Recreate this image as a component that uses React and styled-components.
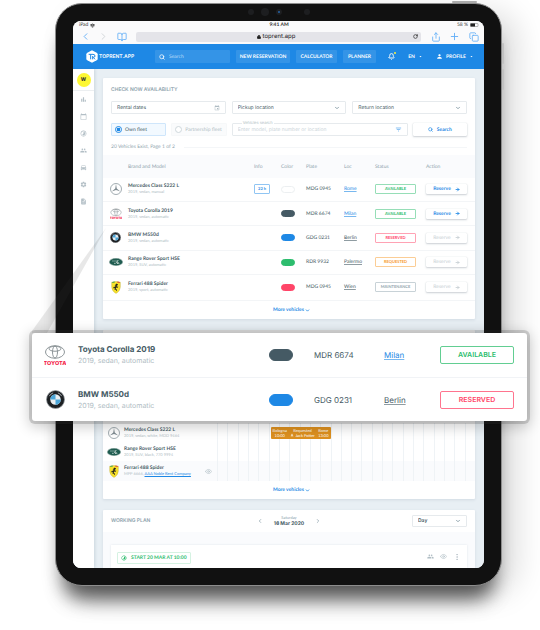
import React from "react";
import styled, { createGlobalStyle, css } from "styled-components";
import {
  BookOpen, ChevronDown, ChevronLeft, ChevronRight, Copy, Plus, RotateCw, Share,
  Search, Bell, Eye, MoreVertical, Wifi, ArrowRight, Lock,
} from "lucide-react";
import {
  MdBarChart, MdCalendarToday, MdTimelapse, MdPeople, MdDirectionsCar, MdSettings,
  MdDescription, MdPerson, MdFilterList, MdArrowDropDown, MdEvent, MdGroup,
} from "react-icons/md";

const c = {
  ink: "#455a64",
  mute: "#90a4ae",
  soft: "#b0bdc4",
  line: "#eceff1",
  blue: "#1e88e5",
  green: "#2dbd6e",
  red: "#ff4568",
  orange: "#f79a2b",
};

const wide = `Inter, "Liberation Sans", sans-serif`;

const GlobalStyle = createGlobalStyle`
  *, *::before, *::after { box-sizing: border-box; }
  body {
    margin: 0;
    overflow-x: hidden;
    background: #fff;
    color: ${c.ink};
    font-family: Lato, "Liberation Sans", sans-serif;
    font-size: 5px;
    line-height: 6px;
    text-rendering: geometricPrecision;
  }
  button, input, select { font: inherit; color: inherit; margin: 0; padding: 0; border: 0; background: none; border-radius: 0; outline: 0; text-rendering: inherit; }
  button { cursor: pointer; white-space: nowrap; }
  svg { display: block; flex: none; }
  h2 { margin: 0; }
`;

const Page = styled.div`
  position: relative;
  padding: 3px 38px 43px 55px;
  overflow: hidden;
`;

const Tablet = styled.div`
  position: relative;
  border: 1px solid #8d8d8d;
  border-radius: 27px;
  background: #111;
  padding: 17px;
  box-shadow: 0 20px 18px -8px rgba(0, 0, 0, 0.5), 0 26px 24px -14px rgba(0, 0, 0, 0.3), 16px 8px 30px rgba(0, 0, 0, 0.13);
`;

const SideKey = styled.span`
  position: absolute;
  right: -3px;
  top: ${(p) => p.$top}px;
  width: 2px;
  height: 21px;
  border-radius: 1px;
  background: #c2c2c2;
`;

const PowerKey = styled.span`
  position: absolute;
  right: 24px;
  top: -3px;
  width: 25px;
  height: 2px;
  border-radius: 1px;
  background: #aaa;
`;

const Camera = styled.svg`
  position: absolute;
  left: 50%;
  top: 3px;
  transform: translateX(-50%);
`;

const Screen = styled.div`
  overflow: hidden;
  border-radius: 8px;
  background: #fff;
`;

const BrowserChrome = styled.div`
  height: 23px;
  background: #fafafb;
`;

const StatusBar = styled.div`
  display: grid;
  grid-template-columns: 1fr auto 1fr;
  align-items: center;
  height: 8px;
  padding: 0 5px 0 6px;
  color: #333;
  font-weight: 700;
`;

const StatusGroup = styled.span`
  display: flex;
  align-items: center;
  gap: 2px;
  font-weight: 400;
  justify-content: ${(p) => (p.$end ? "flex-end" : "flex-start")};
`;

const Toolbar = styled.div`
  display: flex;
  align-items: center;
  height: 15px;
  padding: 0 1px 0 7px;
  color: #62aef7;
`;

const ToolButton = styled.button`
  display: grid;
  place-items: center;
  width: ${(p) => p.$w || 19}px;
  color: ${(p) => (p.$off ? "#cfd3d8" : "inherit")};
`;

const Address = styled.div`
  flex: 1;
  display: flex;
  align-items: center;
  height: 10px;
  margin: 0 5px 0 8px;
  padding: 0 3px;
  border-radius: 2px;
  background: #e4e4e9;
  color: #222;
  font-family: ${wide};
  font-size: 6px;
`;

const AddressText = styled.span`
  flex: 1;
  display: flex;
  justify-content: center;
  align-items: center;
  gap: 2px;
`;

const AppBar = styled.header`
  display: flex;
  align-items: center;
  height: 25px;
  padding: 0 10px 0 13px;
  background: ${c.blue};
  color: #fff;
  font-weight: 700;
`;

const Brand = styled.a`
  display: flex;
  align-items: center;
  gap: 1px;
  width: 69px;
  color: inherit;
  text-decoration: none;
  font-family: ${wide};
  font-size: 5px;
  font-weight: 600;
`;

const HeaderSearch = styled.label`
  display: flex;
  align-items: center;
  gap: 4px;
  width: 75px;
  height: 13px;
  padding: 0 4px;
  border-radius: 1px;
  background: rgba(255, 255, 255, 0.1);
  font-weight: 400;
  input { flex: 1; min-width: 0; }
  input::placeholder { color: #b8dbf8; opacity: 1; }
`;

const NavButton = styled.button`
  width: ${(p) => p.$w}px;
  height: 13px;
  margin-left: 6px;
  border-radius: 1px;
  background: rgba(255, 255, 255, 0.1);
  font-weight: 700;
`;

const HeaderTools = styled.div`
  display: flex;
  align-items: center;
  margin-left: auto;
  gap: 13px;
`;

const HeaderTool = styled.button`
  position: relative;
  display: flex;
  align-items: center;
  gap: 3px;
  font-weight: 700;
`;

const Dot = styled.span`
  position: absolute;
  top: -1px;
  right: -1px;
  width: 2px;
  height: 2px;
  border-radius: 50%;
  background: #fff23a;
`;

const Body = styled.div`
  display: grid;
  grid-template-columns: 21px 1fr;
  background: #e8eff4;
`;

const Sidebar = styled.nav`
  display: flex;
  flex-direction: column;
  align-items: center;
  background: #fff;
  box-shadow: 1px 0 3px rgba(80, 110, 130, 0.2);
  color: #b3bfc6;
`;

const AvatarCell = styled.div`
  display: grid;
  place-items: center;
  width: 100%;
  height: 22px;
  border-bottom: 1px solid ${c.line};
`;

const Avatar = styled.button`
  width: 14px;
  height: 14px;
  border-radius: 50%;
  background: #fdf733;
  color: #333;
  font-family: ${wide};
  font-weight: 800;
`;

const SideLink = styled.a`
  display: grid;
  place-items: center;
  height: 17px;
  color: inherit;
`;

const Main = styled.main`
  display: flex;
  flex-direction: column;
  gap: 11px;
  min-width: 0;
  padding: 9px 9px 0;
`;

const Card = styled.section`
  background: #fff;
  border-radius: 1px;
  box-shadow: 0 1px 3px rgba(80, 110, 130, 0.15);
`;

const Title = styled.h2`
  color: ${c.mute};
  font-family: ${wide};
  font-size: 5px;
  line-height: 8px;
  font-weight: 600;
`;

const SearchForm = styled.form`
  display: flex;
  flex-direction: column;
  gap: 9px;
  padding: 8px 8px 0;
`;

const FieldRow = styled.div`
  display: grid;
  grid-template-columns: 1fr 1fr 1fr;
  gap: 6px;
  margin-top: ${(p) => (p.$first ? -2 : 0)}px;
`;

const FieldRowSearch = styled(FieldRow)`
  grid-template-columns: 55fr 55fr 175fr 54fr;
  gap: 5px;
`;

const box = css`
  height: 13px;
  border: 1px solid #e6eaed;
  border-radius: 1px;
`;

const Field = styled.label`
  ${box}
  position: relative;
  display: grid;
  align-items: center;
  min-width: 0;
  padding: 0 5px;
  font-family: ${wide};
  font-size: 5px;
  color: ${c.mute};
  > * { grid-area: 1 / 1; }
  > svg { justify-self: end; pointer-events: none; }
  > input, > select { width: 100%; appearance: none; color: ${c.ink}; }
  > input::placeholder { color: ${(p) => (p.$faint ? "#ccd5da" : c.ink)}; opacity: 1; }
`;

const FloatLabel = styled.span`
  position: absolute;
  top: -4px;
  left: 4px;
  padding: 0 1px;
  background: #fff;
  color: ${c.soft};
  font-size: 4px;
`;

const FleetOption = styled.label`
  ${box}
  display: flex;
  align-items: center;
  gap: 3px;
  min-width: 0;
  padding: 0 3px;
  white-space: nowrap;
  border-color: ${(p) => (p.$on ? "#cfe6fb" : "#f6f8f9")};
  background: ${(p) => (p.$on ? "#f2f9ff" : "#fafbfc")};
  color: ${(p) => (p.$on ? c.ink : c.soft)};
  input {
    appearance: none;
    flex: none;
    width: 7px;
    height: 7px;
    border: 1px solid #cfd8dc;
    border-radius: 50%;
    background: #fff;
  }
  input:checked {
    border-color: ${c.blue};
    background: radial-gradient(circle, ${c.blue} 45%, #fff 60%);
  }
`;

const RaisedButton = styled.button`
  display: flex;
  align-items: center;
  justify-content: center;
  gap: 4px;
  width: 100%;
  height: ${(p) => p.$h || 10}px;
  border-radius: 1px;
  background: #fff;
  box-shadow: 0 1px 2px rgba(60, 80, 100, 0.25), 0 0 1px rgba(60, 80, 100, 0.25);
  color: ${c.blue};
  font-weight: 700;
  &:disabled { color: #c5ced3; font-weight: 400; cursor: default; }
`;

const Summary = styled.div`
  display: flex;
  align-items: center;
  gap: 9px;
  height: 6px;
  margin-top: -1px;
  color: ${c.mute};
  &::after { content: ""; flex: 1; border-top: 1px solid #f4f6f8; }
`;

const FleetTable = styled.table`
  width: 100%;
  height: 146px;
  margin-top: 5px;
  table-layout: fixed;
  border-collapse: collapse;
  th { height: 23px; padding: 0; background: #fafbfd; color: ${c.mute}; text-align: left; font-weight: 400; }
  td { padding: 0; border-bottom: 1px solid #f3f5f7; }
  td:last-child { padding-right: 8px; }
`;

const Col = styled.col`
  width: ${(p) => (p.$w ? `${p.$w}px` : "auto")};
`;

const LogoBox = styled.div`
  display: grid;
  place-items: center;
  width: ${(p) => p.$w || 25}px;
`;

const CarName = styled.div`
  font-weight: 700;
  font-family: ${(p) => (p.$big ? wide : "inherit")};
  font-size: ${(p) => (p.$big ? 8 : 5)}px;
  line-height: ${(p) => (p.$big ? 11 : 6)}px;
`;

const CarMeta = styled.div`
  color: ${c.soft};
  font-family: ${(p) => (p.$big ? wide : "inherit")};
  font-size: ${(p) => (p.$big ? 7 : 4)}px;
  line-height: ${(p) => (p.$big ? 11 : 6)}px;
  a { color: ${c.blue}; }
`;

const InfoTag = styled.button`
  width: 16px;
  height: 10px;
  border: 1px solid #90c5f3;
  border-radius: 1px;
  color: ${c.blue};
  font-size: 4px;
  line-height: 6px;
  font-weight: 700;
`;

const Swatch = styled.div`
  width: ${(p) => (p.$big ? 24 : 14)}px;
  height: ${(p) => (p.$big ? 12 : 7)}px;
  border-radius: 6px;
  background: ${(p) => p.$color};
  border: 1px solid ${(p) => (p.$color === "#fff" ? c.line : p.$color)};
`;

const Place = styled.a`
  color: ${(p) => (p.$active ? c.blue : c.ink)};
  text-underline-offset: 1px;
  text-decoration-thickness: 1px;
  text-decoration-color: color-mix(in srgb, currentColor 60%, #fff);
`;

const tone = { AVAILABLE: c.green, RESERVED: c.red, REQUESTED: c.orange, MAINTENANCE: c.mute };

const Status = styled.span`
  display: flex;
  align-items: center;
  justify-content: center;
  width: ${(p) => (p.$big ? 74 : 41)}px;
  height: ${(p) => (p.$big ? 18 : 10)}px;
  border: 1px solid color-mix(in srgb, ${(p) => tone[p.$kind]} ${(p) => (p.$big ? 75 : 50)}%, #fff);
  border-radius: ${(p) => (p.$big ? 2 : 1)}px;
  color: ${(p) => tone[p.$kind]};
  font-family: ${(p) => (p.$big ? wide : "inherit")};
  font-size: ${(p) => (p.$big ? 7 : 4)}px;
  font-weight: ${(p) => (p.$big ? 600 : 700)};
`;

const MoreButton = styled.button`
  display: flex;
  align-items: center;
  justify-content: center;
  gap: 1px;
  width: 100%;
  height: 18px;
  padding-left: 5px;
  color: ${c.blue};
  font-weight: 700;
`;

const PlannerHead = styled.div`
  height: 93px;
`;

const Lane = styled.div`
  display: grid;
  grid-template-columns: 114px 1fr;
  height: ${(p) => (p.$shade ? 20 : 19)}px;
  background: ${(p) => (p.$shade ? "#fafbfd" : "#fff")};
`;

const LaneCar = styled.div`
  display: flex;
  align-items: center;
  padding-right: 5px;
  > div + div { flex: 1; white-space: nowrap; }
`;

const Hours = styled.div`
  display: grid;
  grid-template-columns: repeat(25, 1fr);
  grid-template-rows: 100%;
  align-items: center;
`;

const Hour = styled.span`
  grid-row: 1;
  grid-column: ${(p) => p.$n};
  height: 100%;
  border-left: 1px solid #eff3f6;
`;

const Booking = styled.div`
  grid-row: 1;
  grid-column: 6 / span 6;
  display: flex;
  justify-content: space-between;
  height: 12px;
  margin-left: 2px;
  padding: 1px 2px;
  border-radius: 1px;
  background: #dd901f;
  color: #fff;
  font-size: 4px;
  line-height: 5px;
  font-weight: 400;
  white-space: nowrap;
`;

const BookingPart = styled.span`
  display: grid;
  justify-items: center;
`;

const WithIcon = styled.span`
  display: flex;
  align-items: center;
  gap: 1px;
`;

const PlanHead = styled.div`
  display: grid;
  grid-template-columns: 1fr auto 1fr;
  align-items: center;
  height: 22px;
  padding: 0 8px;
`;

const DateNav = styled.div`
  display: flex;
  align-items: center;
  gap: 11px;
  color: ${c.mute};
`;

const DateText = styled.div`
  text-align: center;
  font-size: 4px;
  strong { display: block; color: ${c.ink}; font-family: ${wide}; font-size: 5px; font-weight: 700; }
`;

const PeriodField = styled(Field)`
  justify-self: end;
  width: 55px;
  height: 12px;
  font-weight: 600;
`;

const PlanBody = styled.div`
  padding: 13px 8px 0;
  background: #fafbfd;
`;

const PlanItem = styled.div`
  display: flex;
  align-items: center;
  justify-content: space-between;
  height: 23px;
  padding: 0 6px;
  background: #fff;
  box-shadow: 0 0 2px rgba(80, 110, 130, 0.15);
`;

const StartButton = styled.button`
  display: flex;
  align-items: center;
  gap: 4px;
  height: 12px;
  min-width: 70px;
  padding: 0 3px;
  margin-top: 2px;
  border: 1px solid #d5f2e2;
  border-radius: 1px;
  color: ${c.green};
  font-weight: 700;
`;

const ItemTools = styled.div`
  display: flex;
  align-items: center;
  gap: 6px;
  color: ${c.soft};
`;

const Beam = styled.svg`
  position: absolute;
  left: 32px;
  top: 228px;
`;

const Magnifier = styled.div`
  position: absolute;
  top: 333px;
  left: 32px;
  right: 13px;
  border-radius: 3px;
  background: #fff;
  box-shadow: 0 0 0 3px rgba(60, 60, 60, 0.2), 0 3px 14px 3px rgba(0, 0, 0, 0.2);
`;

const BigRow = styled.div`
  display: grid;
  grid-template-columns: 46px 1fr 45px 70px 56px 87px;
  align-items: center;
  height: 44px;
  font-family: ${wide};
  font-size: 8px;
  line-height: 10px;
  & + & { border-top: 1px solid #f1f3f6; }
`;

function Mercedes() {
  return (
    <svg width="12" height="12" viewBox="0 0 24 24" fill="none" stroke="#8c989e" strokeWidth="1.6">
      <circle cx="12" cy="12" r="11" />
      <path d="M12 2l1.5 9 7 6-8.500-3-8.500 3 7-6z" fill="#7f8b91" stroke="none" />
    </svg>
  );
}

function Toyota({ size = 12 }) {
  return (
    <svg width={size} height={size} viewBox="0 0 44 44">
      <g fill="none" stroke="#8e9699" strokeWidth="2">
        <ellipse cx="22" cy="16" rx="19" ry="12.500" />
        <ellipse cx="22" cy="9.500" rx="12" ry="5" />
        <ellipse cx="22" cy="16" rx="5" ry="12" />
      </g>
      <text x="22" y="42" textAnchor="middle" fontFamily="Inter, sans-serif" fontSize="11" fontWeight="800" fill="#f4264b">TOYOTA</text>
    </svg>
  );
}

function Bmw({ size = 11 }) {
  return (
    <svg width={size} height={size} viewBox="0 0 40 40">
      <circle cx="20" cy="20" r="19" fill="#1c1f22" stroke="#9a9fa3" strokeWidth="1.500" />
      <path d="M7 13a15 15 0 0 1 8-7M25 6a15 15 0 0 1 8 7" stroke="#a9afb3" strokeWidth="2" fill="none" />
      <circle cx="20" cy="20" r="11" fill="#e9eef1" />
      <path d="M20 20V9A11 11 0 0 0 9 20zM20 20v11A11 11 0 0 0 31 20z" fill="#4aa5d8" />
    </svg>
  );
}

function LandRover() {
  return (
    <svg width="14" height="8" viewBox="0 0 42 24">
      <ellipse cx="21" cy="12" rx="20" ry="11" fill="#1f5c50" stroke="#8fa9a2" strokeWidth="1.500" />
      <path d="M10 9h4M16 9h4M22 9h4M28 6l-6 8h6l-4 4M15 16h5M26 16h5" stroke="#e4eeea" strokeWidth="2" fill="none" />
    </svg>
  );
}

function Ferrari() {
  return (
    <svg width="10" height="13" viewBox="0 0 30 38">
      <path d="M2 3q13-4 26 0v14q0 13-13 20Q2 30 2 17z" fill="#f8e22c" stroke="#a99a3a" />
      <path d="M3 3q4-1.500 8-1.800V5H3z" fill="#3fa35b" />
      <path d="M19 1.200q4 .4 8 1.800v2h-8z" fill="#e0413e" />
      <path d="M17 7l4 3-1 3-2-1-1 4 5 1-2 3-4-1-2 4 4 3-1 4-3-4-4-1 2-5-4 2-1-4 3-2 1 2 3-4-3-2 3-2z" fill="#23241f" />
    </svg>
  );
}

function BrandMark() {
  return (
    <svg width="12" height="13" viewBox="0 0 36 39">
      <path d="M18 1l14 7q3 2 3 5v13q0 3-3 5l-14 7-14-7q-3-2-3-5V13q0-3 3-5z" fill="#fff" />
      <path d="M8 13h13q6 0 6 5 0 4-5 4l5 6M14 13v15M20 18v10" fill="none" stroke={c.blue} strokeWidth="3" />
    </svg>
  );
}

const cars = [
  { name: "Mercedes Class S222 L", meta: "2019, sedan, manual", logo: Mercedes, info: "22 h", color: "#fff", plate: "MDG 0945", place: "Rome", status: "AVAILABLE" },
  { name: "Toyota Corolla 2019", meta: "2019, sedan, automatic", logo: Toyota, color: "#455a64", plate: "MDR 6674", place: "Milan", status: "AVAILABLE" },
  { name: "BMW M550d", meta: "2019, sedan, automatic", logo: Bmw, color: c.blue, plate: "GDG 0231", place: "Berlin", status: "RESERVED" },
  { name: "Range Rover Sport HSE", meta: "2019, SUV, automatic", logo: LandRover, color: c.green, plate: "RDR 9932", place: "Palermo", status: "REQUESTED" },
  { name: "Ferrari 488 Spider", meta: "2019, sport, automatic", logo: Ferrari, color: c.red, plate: "MDG 0945", place: "Wien", status: "MAINTENANCE" },
];

const sideLinks = [
  ["Statistics", MdBarChart], ["Calendar", MdCalendarToday], ["Activity", MdTimelapse],
  ["Clients", MdPeople], ["Cars", MdDirectionsCar], ["Settings", MdSettings], ["Documents", MdDescription],
];

const hours = Array.from({ length: 25 }, (_, i) => i + 1);

function LaneRow({ car, meta, shade, children, tool }) {
  const Logo = car.logo;
  return (
    <Lane $shade={shade}>
      <LaneCar>
        <LogoBox $w={21}><Logo /></LogoBox>
        <div>
          <CarName>{car.name}</CarName>
          <CarMeta>{meta}</CarMeta>
        </div>
        {tool}
      </LaneCar>
      <Hours>
        {hours.map((n) => <Hour key={n} $n={n} />)}
        {children}
      </Hours>
    </Lane>
  );
}

function Availability() {
  return (
    <Card>
      <SearchForm onSubmit={(e) => e.preventDefault()}>
        <Title>CHECK NOW AVAILABILITY</Title>
        <FieldRow $first>
          <Field>
            <input type="text" placeholder="Rental dates" aria-label="Rental dates" />
            <MdEvent size={6} color={c.soft} />
          </Field>
          <Field>
            <select aria-label="Pickup location"><option>Pickup location</option></select>
            <ChevronDown size={6} strokeWidth={4} />
          </Field>
          <Field>
            <select aria-label="Return location"><option>Return location</option></select>
            <ChevronDown size={6} strokeWidth={4} />
          </Field>
        </FieldRow>
        <FieldRowSearch>
          <FleetOption $on><input type="radio" name="fleet" defaultChecked />Own fleet</FleetOption>
          <FleetOption><input type="radio" name="fleet" />Partnership fleet</FleetOption>
          <Field $faint>
            <FloatLabel>Vehicles search</FloatLabel>
            <input type="text" placeholder="Enter model, plate number or location" />
            <MdFilterList size={7} color={c.blue} />
          </Field>
          <RaisedButton type="submit" $h={13}><Search size={5} strokeWidth={3} />Search</RaisedButton>
        </FieldRowSearch>
        <Summary>20 Vehicles Exist, Page 1 of 2</Summary>
      </SearchForm>
      <FleetTable>
        <colgroup>
          <Col $w={25} /><Col /><Col $w={27} /><Col $w={25} /><Col $w={38} /><Col $w={31} /><Col $w={51} /><Col $w={49} />
        </colgroup>
        <thead>
          <tr>
            <th aria-label="Logo" />
            {["Brand and Model", "Info", "Color", "Plate", "Loc", "Status", "Action"].map((h) => <th key={h}>{h}</th>)}
          </tr>
        </thead>
        <tbody>
          {cars.map((car) => {
            const Logo = car.logo;
            const free = car.status === "AVAILABLE";
            return (
              <tr key={car.name}>
                <td><LogoBox><Logo /></LogoBox></td>
                <td><CarName>{car.name}</CarName><CarMeta>{car.meta}</CarMeta></td>
                <td>{car.info && <InfoTag>{car.info}</InfoTag>}</td>
                <td><Swatch $color={car.color} /></td>
                <td>{car.plate}</td>
                <td><Place href="#" $active={free}>{car.place}</Place></td>
                <td><Status $kind={car.status}>{car.status}</Status></td>
                <td><RaisedButton disabled={!free}>Reserve <ArrowRight size={5} strokeWidth={4} /></RaisedButton></td>
              </tr>
            );
          })}
        </tbody>
      </FleetTable>
      <MoreButton>More vehicles <ChevronDown size={5} strokeWidth={4} /></MoreButton>
    </Card>
  );
}

function Planner() {
  return (
    <Card>
      <PlannerHead />
      <LaneRow car={cars[0]} meta="2019, sedan, white, MDD 9464">
        <Booking>
          <BookingPart><span>Bologna</span><span>10:00</span></BookingPart>
          <BookingPart><span>Requested</span><WithIcon><MdPerson size={4} />Jack Potter</WithIcon></BookingPart>
          <BookingPart><span>Rome</span><span>13:00</span></BookingPart>
        </Booking>
      </LaneRow>
      <LaneRow car={cars[3]} meta="2019, SUV, black, 770 9994" />
      <LaneRow
        car={cars[4]}
        shade
        meta={<>MPP 6666, <a href="#">AAA Noble Rent Company</a></>}
        tool={<Eye size={7} color={c.soft} />}
      />
      <MoreButton>More vehicles <ChevronDown size={5} strokeWidth={4} /></MoreButton>
    </Card>
  );
}

function WorkingPlan() {
  return (
    <Card>
      <PlanHead>
        <Title>WORKING PLAN</Title>
        <DateNav>
          <button aria-label="Previous day"><ChevronLeft size={6} strokeWidth={3} /></button>
          <DateText>Saturday<strong>16 Mar 2020</strong></DateText>
          <button aria-label="Next day"><ChevronRight size={6} strokeWidth={3} /></button>
        </DateNav>
        <PeriodField>
          <select aria-label="Period"><option>Day</option></select>
          <ChevronDown size={6} strokeWidth={4} />
        </PeriodField>
      </PlanHead>
      <PlanBody>
        <PlanItem>
          <StartButton><MdTimelapse size={6} />START 20 MAR AT 10:00</StartButton>
          <ItemTools>
            <MdGroup size={7} />
            <Eye size={7} />
            <MoreVertical size={8} />
          </ItemTools>
        </PlanItem>
      </PlanBody>
    </Card>
  );
}

export default function App() {
  return (
    <Page>
      <GlobalStyle />
      <Tablet>
        <PowerKey />
        <SideKey $top={39} />
        <SideKey $top={65} />
        <Camera width="66" height="10" viewBox="0 0 66 10">
          <g fill="#1d1e20">
            <circle cx="5" cy="5" r="3" />
            <circle cx="19" cy="5" r="4" />
            <circle cx="33" cy="5" r="3" />
            <circle cx="61" cy="5" r="3" />
          </g>
          <circle cx="33" cy="5" r="1" fill="#2465a8" />
        </Camera>
        <Screen>
          <BrowserChrome>
            <StatusBar>
              <StatusGroup>iPad <Wifi size={5} strokeWidth={4} /></StatusGroup>
              <span>9:41 AM</span>
              <StatusGroup $end>
                58 %
                <svg width="9" height="4" viewBox="0 0 18 8">
                  <rect x="1" y="1" width="15" height="6" rx="1" fill="none" stroke="#777" />
                  <rect x="1" y="1" width="9" height="6" fill="#222" />
                </svg>
              </StatusGroup>
            </StatusBar>
            <Toolbar>
              <ToolButton $w={10} aria-label="Back"><ChevronLeft size={11} strokeWidth={2} /></ToolButton>
              <ToolButton $w={26} $off aria-label="Forward"><ChevronRight size={11} strokeWidth={2} /></ToolButton>
              <ToolButton $w={12} aria-label="Bookmarks"><BookOpen size={10} strokeWidth={2} /></ToolButton>
              <Address>
                <AddressText><Lock size={4} strokeWidth={4} fill="#222" />toprent.app</AddressText>
                <RotateCw size={5} strokeWidth={3} />
              </Address>
              <ToolButton aria-label="Share"><Share size={10} strokeWidth={2} /></ToolButton>
              <ToolButton aria-label="New tab"><Plus size={11} strokeWidth={2} /></ToolButton>
              <ToolButton aria-label="Tabs"><Copy size={10} strokeWidth={2} /></ToolButton>
            </Toolbar>
          </BrowserChrome>
          <AppBar>
            <Brand href="#"><BrandMark />TOPRENT.APP</Brand>
            <HeaderSearch>
              <Search size={6} strokeWidth={3} />
              <input type="search" placeholder="Search" aria-label="Search" />
            </HeaderSearch>
            <NavButton $w={54}>NEW RESERVATION</NavButton>
            <NavButton $w={41}>CALCULATOR</NavButton>
            <NavButton $w={33}>PLANNER</NavButton>
            <HeaderTools>
              <HeaderTool aria-label="Notifications"><Bell size={7} strokeWidth={3} /><Dot /></HeaderTool>
              <HeaderTool>EN <MdArrowDropDown size={5} /></HeaderTool>
              <HeaderTool><MdPerson size={7} />PROFILE <MdArrowDropDown size={5} /></HeaderTool>
            </HeaderTools>
          </AppBar>
          <Body>
            <Sidebar>
              <AvatarCell><Avatar aria-label="Account">W</Avatar></AvatarCell>
              {sideLinks.map(([label, Icon]) => (
                <SideLink key={label} href="#" aria-label={label}><Icon size={7} /></SideLink>
              ))}
            </Sidebar>
            <Main>
              <Availability />
              <Planner />
              <WorkingPlan />
            </Main>
          </Body>
        </Screen>
      </Tablet>
      <Beam width="74" height="105" viewBox="0 0 74 105">
        <path d="M74 0L0 103v2h15z" fill="#444" fillOpacity="0.12" />
      </Beam>
      <Magnifier>
        {[cars[1], cars[2]].map((car) => {
          const Logo = car.logo;
          return (
            <BigRow key={car.name}>
              <LogoBox $w={46}><Logo size={car.logo === Toyota ? 22 : 19} /></LogoBox>
              <div><CarName $big>{car.name}</CarName><CarMeta $big>{car.meta}</CarMeta></div>
              <Swatch $big $color={car.color} />
              <span>{car.plate}</span>
              <span><Place href="#" $active={car.status === "AVAILABLE"}>{car.place}</Place></span>
              <Status $big $kind={car.status}>{car.status}</Status>
            </BigRow>
          );
        })}
      </Magnifier>
    </Page>
  );
}
